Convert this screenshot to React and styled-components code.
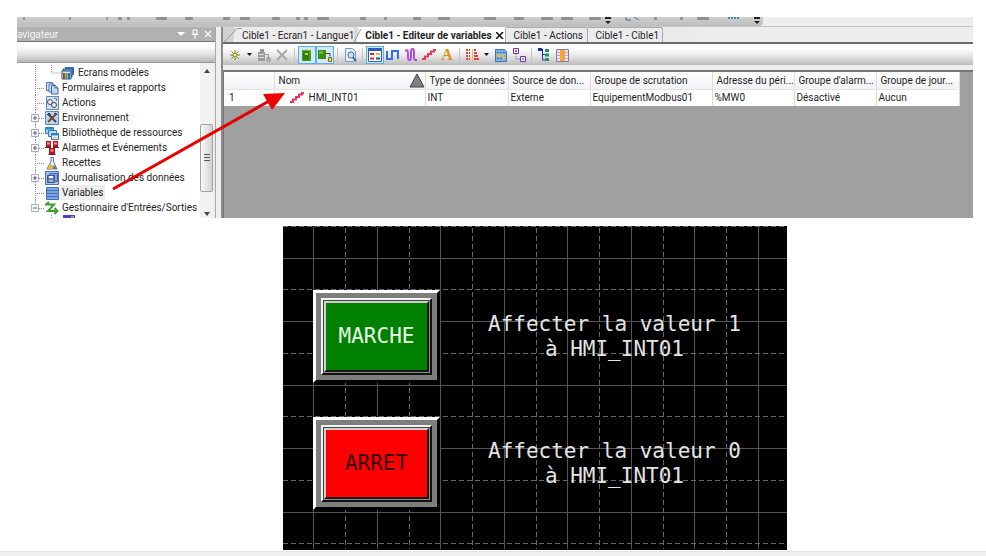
import styled, { createGlobalStyle, css } from 'styled-components';

const GlobalStyle = createGlobalStyle`
  * {
    box-sizing: border-box;
  }

  body {
    margin: 0;
    background: #fff;
    color: #1e1e28;
    font-family: Roboto, 'Open Sans', sans-serif;
    font-size: 10px;
    line-height: 15px;
  }

  button {
    padding: 0;
    border: 0;
    background: none;
    color: inherit;
    font: inherit;
  }

  svg {
    display: block;
    flex: none;
  }
`;

// --- PAGE ---

const Page = styled.div`
  min-height: 100vh;
  display: flex;
  flex-direction: column;
`;

const Footer = styled.footer`
  flex: 1;
  min-height: 5px;
  margin-top: 1px;
  border-top: 1px solid #e4e4e4;
  background: #f0f0f0;
`;

// --- EDITOR WINDOW ---

const Window = styled.section`
  position: relative;
  margin: 17px 13px 8px 17px;
  background: #eee;
`;

const Strip = styled.div`
  display: flex;
  height: 10px;
  border-bottom: 1px solid #c4c4c4;
  overflow: hidden;
`;

const StripBar = styled.div`
  border-radius: 0 0 4px 0;
  background: linear-gradient(#cfcfcf, #bdbdbd);
`;

const Panes = styled.div`
  display: grid;
  grid-template-columns: 199px minmax(0, 1fr);
  column-gap: 5px;
`;

const Arrow = styled.svg`
  position: absolute;
  left: 0;
  top: 0;
  pointer-events: none;
`;

// --- NAVIGATOR ---

const Navigator = styled.aside`
  display: flex;
  flex-direction: column;
  border-right: 1px solid #a8a8a8;
`;

const NavTitle = styled.div`
  display: flex;
  align-items: center;
  height: 14px;
  padding-right: 4px;
  overflow: hidden;
  background: #b1b1b1;
  color: #f4f4f4;
`;

const NavName = styled.h2`
  flex: 1;
  margin: 0;
  font-size: 10px;
  font-weight: 400;
`;

const NavCombo = styled.div`
  height: 22px;
  border-top: 1px solid #777;
  border-bottom: 1px solid #999;
  background: linear-gradient(#fff 20%, #e4e4e4 60%, #b8b8b8);
`;

const NavBody = styled.div`
  display: flex;
  padding-right: 2px;
`;

const Tree = styled.ul`
  flex: 1;
  margin: 0;
  padding: 2px 0 0;
  list-style: none;
  background: #fff;
`;

const TreeRow = styled.li`
  display: flex;
  align-items: center;
  height: ${(p) => (p.$clipped ? 3 : 15)}px;
  overflow: hidden;
  white-space: nowrap;
  ${(p) => p.$clipped && css`align-items: flex-start;`}
`;

const TreeLabel = styled.span`
  margin-left: 1px;
  padding: 0 2px;
  background: ${(p) => (p.$selected ? '#ededed' : 'none')};
`;

const Scrollbar = styled.div`
  display: flex;
  flex-direction: column;
  width: 13px;
  background: #f1f1f1;
`;

const ScrollArrow = styled.button`
  display: flex;
  justify-content: center;
  align-items: center;
  height: ${(p) => (p.$down ? 8 : 16)}px;
`;

const ScrollSpace = styled.div`
  flex: ${(p) => p.$grow};
`;

const ScrollThumb = styled.div`
  display: flex;
  align-items: center;
  justify-content: center;
  height: 68px;
  border: 1px solid #a2a2a2;
  border-radius: 2px;
  background: linear-gradient(90deg, #f8f8f8, #d2d2d2);
`;

// --- EDITOR ---

const Editor = styled.div`
  display: flex;
  flex-direction: column;
  border-left: 2px solid #8a8a8a;
  background: #eee;
`;

const Tabs = styled.div`
  display: flex;
  height: 15px;
  background: linear-gradient(90deg, #d2d2d2, #eee 70%);
  white-space: nowrap;
`;

const Tab = styled.button`
  display: flex;
  align-items: center;
  min-width: ${(p) => p.$width}px;
  gap: ${(p) => (p.$active ? 4 : 0)}px;
  border-top: 1px solid ${(p) => (p.$slant ? 'transparent' : '#aaa')};
  border-right: ${(p) => (p.$slant && !p.$active ? 0 : 1)}px solid #aaa;
  border-radius: 0 3px 0 0;
  ${(p) => !p.$slant && css`
    padding-left: 8px;
    background: #ececec;
  `}
  ${(p) => p.$slant && css`
    background: linear-gradient(100deg, transparent ${p.$slant}px, ${p.$active ? '#fff' : '#ececec'} ${p.$slant}px);
  `}
  ${(p) => p.$active && css`font-weight: 700;`}
`;

const Toolbar = styled.div`
  display: flex;
  align-items: center;
  height: 23px;
  padding-left: 3px;
  border-top: 2px solid #6c6c6c;
  background: linear-gradient(#fff 20%, #e8e8e8 55%, #bcbcbc);
`;

const ToolButton = styled.button`
  display: flex;
  align-items: center;
  justify-content: center;
  width: ${(p) => (p.$narrow ? 11 : 18)}px;
  height: 18px;
  border: 1px solid ${(p) => (p.$pressed ? '#5fb0ea' : 'transparent')};
  background: ${(p) => (p.$pressed ? '#d3e9fa' : 'none')};
`;

const Separator = styled.span`
  width: 1px;
  height: 14px;
  margin: 0 3px;
  background: #c6c6c6;
`;

const Canvas = styled.div`
  flex: 1;
  margin-top: 5px;
  border-top: 2px solid #777;
  border-left: 1px solid #777;
  background: #a0a0a0;
`;

const Table = styled.table`
  table-layout: fixed;
  width: 735px;
  border-collapse: collapse;
  background: #fff;
  white-space: nowrap;

  th,
  td {
    padding: 0 0 0 2px;
    border-right: 1px solid #e0dada;
    font-weight: 400;
    text-align: left;
  }

  th {
    height: 17px;
    padding-left: 4px;
    border-bottom: 1px solid #e4e4e4;
    background: linear-gradient(#fff, #f2f2f4);
  }

  td {
    height: 17px;
  }

  td:first-child {
    padding-left: 5px;
  }
`;

const SortHead = styled.div`
  display: flex;
  align-items: center;
  justify-content: space-between;
`;

const NameCell = styled.div`
  display: flex;
  align-items: center;
  gap: 5px;
  padding-left: 13px;
`;

// --- HMI SCREEN ---

const Hmi = styled.section`
  position: relative;
  align-self: center;
  width: 504px;
  max-width: 100%;
  margin-left: 84px;
  padding: 64px 0 40px 30px;
  background: #000;
  overflow: hidden;
`;

const Grid = styled.svg`
  position: absolute;
  inset: 0;
`;

const Commands = styled.div`
  position: relative;
  display: grid;
  grid-template-columns: 127px max-content;
  column-gap: 48px;
  row-gap: 34px;
  align-items: center;
`;

const PushButton = styled.button`
  display: flex;
  height: 93px;
  padding: 5px;
  border: 3px solid;
  border-color: #fff #000 #000 #fff;
  background: #7c7f7c;
  color: ${(p) => p.$ink};
`;

const Bevel = styled.span`
  flex: 1;
  display: flex;
  border: 2px solid;
  border-color: #f2f2f2 #101010 #101010 #f2f2f2;
`;

const Groove = styled.span`
  flex: 1;
  display: flex;
  border: 1px solid;
  border-color: #444 #8a8a8a #8a8a8a #444;
`;

const Face = styled.span`
  flex: 1;
  display: flex;
  align-items: center;
  justify-content: center;
  border: 2px solid;
  border-color: #cfcfcf #181818 #181818 #cfcfcf;
  background: ${(p) => p.$color};
  font: 21px/25px 'DejaVu Sans Mono', monospace;
`;

const Caption = styled.p`
  margin: 0;
  color: #e4e4e4;
  font: 21px/25px 'DejaVu Sans Mono', monospace;
  text-align: center;
`;

// --- ICONS ---

const icons = {
  screens: (
    <>
      <path d="M4 1h9v8H4z" fill="#3b6fb5" />
      <path d="M2 3h9v8H2z" fill="#7fb1e3" stroke="#28549a" />
      <path d="M1 5h9v8H1z" fill="#e9e4c0" stroke="#28549a" />
      <path d="M3 7v6" stroke="#c33" strokeWidth="2" />
      <path d="M5.500 7v6" stroke="#3a3" strokeWidth="2" />
      <path d="M8 7v6" stroke="#36c" strokeWidth="2" />
    </>
  ),
  forms: (
    <>
      <path d="M1.500 1.500h6v8h-6z" fill="#cfe0f5" stroke="#4b76b8" />
      <path d="M4 3h5v8H4z" fill="#cfe0f5" stroke="#4b76b8" />
      <path d="M6.500 4.500h4l2.500 2.500v6H6.500z" fill="#c3d8f2" stroke="#3d68ac" />
      <path d="M10 4.500V7h3" fill="none" stroke="#3d68ac" />
    </>
  ),
  actions: (
    <>
      <path d="M1.500.500h12v13h-12z" fill="#cfe0f5" stroke="#5f86bb" />
      <circle cx="5" cy="6" r="2.500" fill="#eee" stroke="#555" />
      <circle cx="9" cy="9" r="2.500" fill="#eee" stroke="#444" />
      <path d="M9 2.500h2.500V5" stroke="#678" fill="none" />
    </>
  ),
  environment: (
    <>
      <path d="M.500.500h13v13H.500z" fill="#bcd3f0" stroke="#5b83bd" />
      <path d="M3 3l8 8" stroke="#444" strokeWidth="2" />
      <path d="M11 3l-8 8" stroke="#7a4a26" strokeWidth="2" />
      <path d="M2 4l2-2 2 2M9 3l2-1 1 2" fill="none" stroke="#333" />
    </>
  ),
  library: (
    <>
      <path d="M.500 1.500h8v6h-8z" fill="#a9d1f0" stroke="#2d7cb8" />
      <path d="M.500 1.500h8v2h-8z" fill="#2d8ccb" />
      <path d="M3.500 4.500h8v6h-8z" fill="#bcdcf3" stroke="#2d7cb8" />
      <path d="M6.500 7.500h7v6h-7z" fill="#fff" stroke="#2d6ea8" />
      <path d="M6.500 7.500h7v2h-7z" fill="#2d8ccb" />
      <path d="M8 11.500h4" stroke="#d4a24a" />
    </>
  ),
  alarms: (
    <>
      <path d="M1 0h5v6H1zM8 0h5v6H8zM4 7h6v6H4z" fill="#c0101c" />
      <path d="M2 2.500h3M9 2.500h3M5.500 9.500h3" stroke="#ff9a9a" strokeWidth="2" />
      <path d="M0 6.500h6M8 6.500h6M3.500 13.500h7" stroke="#333" />
    </>
  ),
  recipes: (
    <>
      <path d="M5.500 1.500h3M6 1.500v4l-4 7.500h10L8.500 5.500v-4" fill="#e8eef6" stroke="#66758c" />
      <path d="M3 11l2-2.500 4 1v3.500H2.500z" fill="#e6b735" />
      <path d="M9 9l3 4H8z" fill="#3f78b8" />
    </>
  ),
  logging: (
    <>
      <path d="M.500.500h13v13H.500z" fill="#a9c4ea" stroke="#4a6fb5" />
      <path d="M4.500 2.500h8v8h-8z" fill="#8c9cdc" stroke="#4d64b4" />
      <path d="M2.500 4.500h7v7h-7z" fill="#6478ca" stroke="#3c559f" />
      <path d="M4 5h4v2H4z" fill="#fff" />
      <path d="M4 9h4v2H4z" fill="#8ad08a" />
    </>
  ),
  variables: (
    <>
      <path d="M1.500 1.500h12v12h-12z" fill="#7da7e2" stroke="#426fb5" />
      <path d="M2 4.500h11M2 7.500h11M2 10.500h11" stroke="#3f6cb3" />
    </>
  ),
  io: (
    <path
      d="M4 1L1 3.500h8L3 10h9M9.500 7l3 3-3 3"
      fill="none"
      stroke="#3e9c2d"
      strokeWidth="2"
    />
  ),
  driver: (
    <>
      <path d="M1 0h12v10H1z" fill="#4a3fd0" />
      <path d="M9 1h3v3H9z" fill="#7fb060" />
    </>
  ),
  stairs: (
    <path d="M0 11h3V8.500h3V6h3V3.500h3V2h2" fill="none" stroke="#e8375c" strokeWidth="2" />
  ),
  spark: (
    <>
      <path d="M7 2v10M2 7h10M3.500 3.500l7 7M10.500 3.500l-7 7" stroke="#7d7a1c" />
      <circle cx="7" cy="7" r="2" fill="#f3ee8e" stroke="#8a8420" />
    </>
  ),
  insert: (
    <>
      <path d="M1 4h7v9H1zM3 1h4v3H3z" fill="#9b9b9b" />
      <path d="M2 6.500h5M2 9.500h5" stroke="#ddd" />
      <path d="M8 6.500h3.500V10" fill="none" stroke="#999" />
      <path d="M10 10h3v3h-3z" fill="#ccc" stroke="#888" />
    </>
  ),
  cross: <path d="M2 2l10 10M12 2L2 12" stroke="#a9a9a9" strokeWidth="2" />,
  block: (
    <>
      <path d="M2 2h9v11H2z" fill="#4f9a0c" />
      <path d="M3 3h6v9H3z" fill="#2f7d0a" />
      <path d="M5 5h3v2H5z" fill="#bfe04a" />
      <path d="M3 3l3-1 5 1" stroke="#7fc32b" fill="none" />
    </>
  ),
  blockLink: (
    <>
      <path d="M0 2h8v9H0z" fill="#3c8d0b" />
      <path d="M1 3h4v3H1z" fill="#6cb52a" />
      <path d="M8 5.500h4v3" fill="none" stroke="#444" />
      <path d="M10.500 9.500h3v4h-3z" fill="#f3d34a" stroke="#7b6a12" />
    </>
  ),
  preview: (
    <>
      <path d="M2.500.500h7l3 3v10h-10z" fill="#e3edf8" stroke="#7d9cc4" />
      <circle cx="8" cy="7" r="3" fill="#cfe3f7" stroke="#3f6ea8" />
      <path d="M10 9.500l3 3.500" stroke="#3f6ea8" strokeWidth="2" />
    </>
  ),
  form: (
    <>
      <path d="M.500.500h13v13H.500z" fill="#fff" stroke="#2d5fb8" />
      <path d="M0 1.500h14" stroke="#2d5fb8" strokeWidth="3" />
      <path d="M2 6h4M2 10.500h4" stroke="#d8262c" strokeWidth="2" />
      <path d="M8 6h4" stroke="#e8b52a" strokeWidth="2" />
      <path d="M8 10.500h4" stroke="#2c3fb0" strokeWidth="2" />
    </>
  ),
  square: (
    <path d="M1 3v8h5V3h6v8" fill="none" stroke="#2f6fe0" strokeWidth="2" />
  ),
  wave: (
    <path
      d="M1 3c3-2 3 0 3 3v3c0 4 3 4 3 0V4c0-4 3-4 3 0v5c0 3 1 3 3 3"
      fill="none"
      stroke="#b04be0"
      strokeWidth="2"
    />
  ),
  bars: (
    <>
      <path d="M1 2h4M1 5h4M1 8h4M1 11h4" stroke="#d44" strokeWidth="2" strokeDasharray="2 1" />
      <path d="M7.500 1v12" stroke="#e5c52f" />
      <path d="M9 2h2M9 5h3M9 8h4M9 11h5" stroke="#f03a4a" strokeWidth="2" />
    </>
  ),
  report: (
    <>
      <path d="M1.500 1.500h9l2 2v10h-11z" fill="#7fb2e8" stroke="#4472a8" />
      <path d="M3 4.500h8M3 10.500h8" stroke="#2e6bb0" strokeDasharray="2 1" />
      <path d="M3 7.500h7M8 10h3" stroke="#ecc032" strokeWidth="2" />
    </>
  ),
  links: (
    <>
      <path d="M1.500.500h5v5h-5zM8.500 8.500h5v5h-5z" fill="#f2eaff" stroke="#6b35b5" />
      <path d="M4 6v5h4" fill="none" stroke="#777" strokeDasharray="1 1" />
      <path d="M3 3h2M4 2v2M10 11h2" stroke="#6b35b5" />
    </>
  ),
  hierarchy: (
    <>
      <path d="M1 1.500h5M5.500 2v10h3M5.500 6.500h3" fill="none" stroke="#1a2fb8" />
      <path d="M1 0h4v3H1z" fill="#1a2fb8" />
      <path d="M8 2.500h4M8 7h4M8 11.500h4" stroke="#20935a" strokeWidth="3" />
    </>
  ),
  columns: (
    <>
      <path d="M1.500 1.500h12v12h-12z" fill="#e9e4f2" stroke="#857aa8" />
      <path d="M2 4.500h11M2 7.500h11M2 10.500h11" stroke="#b4acca" />
      <path d="M5 2h5v11H5z" fill="#f2a72e" />
    </>
  ),
};

const Icon = ({ name }) => (
  <svg width="14" height="14" viewBox="0 0 14 14" aria-hidden="true">
    {icons[name]}
  </svg>
);

const LetterA = styled.span`
  color: #d9960f;
  font: 700 16px/16px 'Liberation Serif', serif;
`;

const Caret = () => (
  <svg width="5" height="3" aria-hidden="true">
    <path d="M0 0h5L2.500 3z" fill="#111" />
  </svg>
);

// Dotted branch lines, with the plus or minus box
const Branch = ({ kind }) => {
  const nested = kind === 'nested';
  const boxed = kind === 'plus' || kind === 'minus';
  return (
    <svg width={nested ? 44 : 28} height="15" overflow="visible" aria-hidden="true">
      <g stroke="#8e8e9c" strokeDasharray="1 1" fill="none">
        {kind !== 'leaf' && <path d={kind === 'minus' ? 'M18.500 0v8' : 'M18.500 0v15'} />}
        {nested && <path d="M34.500 0v8h9" />}
        {kind === 'leaf' && <path d="M34.500 0v15" />}
        {!nested && kind !== 'leaf' && <path d="M18 8.500h10" />}
      </g>
      {boxed && (
        <g fill="none" stroke="#a3afc2">
          <path d="M14.500 4.500h7v7h-7z" fill="#f6f6f6" />
          <path d={kind === 'plus' ? 'M16 8h4M18 6v4' : 'M16 8h4'} stroke="#55617c" />
        </g>
      )}
    </svg>
  );
};

// --- DATA ---

const treeItems = [
  { label: 'Ecrans modèles', icon: 'screens', kind: 'nested' },
  { label: 'Formulaires et rapports', icon: 'forms', kind: 'line' },
  { label: 'Actions', icon: 'actions', kind: 'line' },
  { label: 'Environnement', icon: 'environment', kind: 'plus' },
  { label: 'Bibliothèque de ressources', icon: 'library', kind: 'plus' },
  { label: 'Alarmes et Evénements', icon: 'alarms', kind: 'plus' },
  { label: 'Recettes', icon: 'recipes', kind: 'line' },
  { label: 'Journalisation des données', icon: 'logging', kind: 'plus' },
  { label: 'Variables', icon: 'variables', kind: 'line', selected: true },
  { label: "Gestionnaire d'Entrées/Sorties", icon: 'io', kind: 'minus' },
];

const tools = [
  'spark', 'caret', 'insert', 'cross', '|',
  'block*', 'blockLink*', '|',
  'preview', '|',
  'form*', 'square', 'wave', 'stairs', 'letter', '|',
  'bars', 'caret', 'report', 'links', '|',
  'hierarchy', 'columns',
];

const columns = [
  ['Type de données', 'INT', 83],
  ['Source de don...', 'Externe', 82],
  ['Groupe de scrutation', 'EquipementModbus01', 122],
  ['Adresse du péri...', '%MW0', 82],
  ['Groupe d\'alarm...', 'Désactivé', 82],
  ['Groupe de jour...', 'Aucun', 83],
];

const commands = [
  { name: 'MARCHE', color: '#008000', ink: '#e8ffe8', value: 1 },
  { name: 'ARRET', color: '#ff0000', ink: '#300', value: 0 },
];

// [x, width] of the icons cut by the top of the window
const smudges = [
  [6, 2], [52, 2], [89, 2], [101, 4], [110, 3], [139, 11], [168, 8], [206, 7], [223, 10],
  [255, 8], [279, 4], [287, 4], [300, 12], [343, 6], [367, 3], [396, 8], [421, 12],
  [467, 12], [497, 10], [524, 12], [544, 12], [572, 12], [637, 3], [663, 3], [680, 12],
];

const range = (start, step, end) => {
  const out = [];
  for (let v = start; v < end; v += step) out.push(Math.round(v));
  return out;
};

const HmiGrid = () => (
  <Grid width="504" height="323" aria-hidden="true">
    <g stroke="#555" shapeRendering="crispEdges">
      {range(30, 63.5, 504).map((x) => <path key={x} d={`M${x + 0.5} 0V323`} />)}
      {range(32, 63.4, 323).map((y) => <path key={y} d={`M0 ${y + 0.5}H504`} />)}
    </g>
    <g stroke="#666" strokeDasharray="5 3" shapeRendering="crispEdges">
      {range(62, 63.5, 504).map((x) => <path key={x} d={`M${x + 0.5} 2V323`} />)}
      {range(0, 63.4, 323).map((y) => <path key={y} d={`M0 ${y + 0.5}H504`} />)}
    </g>
  </Grid>
);

const Tool = ({ id }) => {
  if (id === '|') return <Separator />;
  if (id === 'caret') return <ToolButton $narrow aria-label="Options"><Caret /></ToolButton>;
  if (id === 'letter') return <ToolButton><LetterA>A</LetterA></ToolButton>;
  const name = id.replace('*', '');
  return (
    <ToolButton $pressed={id.endsWith('*')} aria-label={name}>
      <Icon name={name} />
    </ToolButton>
  );
};

const NavigatorPane = () => (
  <Navigator>
    <NavTitle>
      <NavName>avigateur</NavName>
      <svg width="34" height="10" aria-hidden="true">
        <path d="M0 3h8L4 7z" fill="#fff" />
        <path d="M16 1h4v4h-4zM15 5.500h6M18 6v4" fill="none" stroke="#fff" />
        <path d="M28 2l6 6M34 2l-6 6" stroke="#f4f4f4" strokeWidth="1.500" />
      </svg>
    </NavTitle>
    <NavCombo />
    <NavBody>
      <Tree>
        {treeItems.map((item) => (
          <TreeRow key={item.label}>
            <Branch kind={item.kind} />
            <Icon name={item.icon} />
            <TreeLabel $selected={item.selected}>{item.label}</TreeLabel>
          </TreeRow>
        ))}
        <TreeRow $clipped>
          <Branch kind="leaf" />
          <svg width="17" height="4" aria-hidden="true" />
          <Icon name="driver" />
        </TreeRow>
      </Tree>
      <Scrollbar>
        <ScrollArrow aria-label="Monter">
          <svg width="6" height="4"><path d="M0 4h6L3 0z" fill="#444" /></svg>
        </ScrollArrow>
        <ScrollSpace $grow={44} />
        <ScrollThumb>
          <svg width="6" height="7"><path d="M0 .500h6M0 3.500h6M0 6.500h6" stroke="#555" /></svg>
        </ScrollThumb>
        <ScrollSpace $grow={18} />
        <ScrollArrow $down aria-label="Descendre">
          <svg width="6" height="4"><path d="M0 0h6L3 4z" fill="#444" /></svg>
        </ScrollArrow>
      </Scrollbar>
    </NavBody>
  </Navigator>
);

const VariableTable = () => (
  <Table>
    <colgroup>
      <col width="50" />
      <col width="151" />
      {columns.map(([head, , width]) => <col key={head} width={width} />)}
    </colgroup>
    <thead>
      <tr>
        <th aria-label="Ligne" />
        <th>
          <SortHead>
            Nom
            <svg width="16" height="15" aria-hidden="true">
              <path d="M8 1l7 13H1z" fill="#808080" stroke="#444" />
            </svg>
          </SortHead>
        </th>
        {columns.map(([head]) => <th key={head}>{head}</th>)}
      </tr>
    </thead>
    <tbody>
      <tr>
        <td>1</td>
        <td>
          <NameCell>
            <Icon name="stairs" />
            HMI_INT01
          </NameCell>
        </td>
        {columns.map(([head, value]) => <td key={head}>{value}</td>)}
      </tr>
    </tbody>
  </Table>
);

const App = () => (
  <Page>
    <GlobalStyle />
    <Window>
      <Strip>
        <StripBar>
          <svg width="746" height="9" aria-hidden="true">
            {smudges.map(([x, w]) => (
              <rect key={x} x={x} y="0" width={w} height="3" rx="1" fill="#8f8f8f" />
            ))}
            <path d="M588 0h6v2h-6zM588 4h6l-3 3zM737 0h6v2h-6zM737 4h6l-3 3z" fill="#222" />
            <path d="M609 0v3h5M617 0l5 3" stroke="#3f6fae" fill="none" />
            <path d="M711 1h12" stroke="#3f8fae" strokeWidth="2" strokeDasharray="2 1" />
          </svg>
        </StripBar>
      </Strip>
      <Panes>
        <NavigatorPane />
        <Editor>
          <Tabs>
            <Tab $width={127} $slant={12}>
              <svg width="19" height="15"><path d="M1 14L14 .500H19" fill="none" stroke="#999" /></svg>
              Cible1 - Ecran1 - Langue1
            </Tab>
            <Tab $width={150} $slant={5} $active>
              <svg width="7" height="15"><path d="M0 14L7 1" fill="none" stroke="#999" /></svg>
              Cible1 - Editeur de variables
              <svg width="9" height="7"><path d="M0 0l7 7M7 0L0 7" stroke="#111" strokeWidth="1.500" /></svg>
            </Tab>
            <Tab $width={82}>Cible1 - Actions</Tab>
            <Tab $width={75}>Cible1 - Cible1</Tab>
          </Tabs>
          <Toolbar>
            {tools.map((id, i) => <Tool key={i} id={id} />)}
          </Toolbar>
          <Canvas>
            <VariableTable />
          </Canvas>
        </Editor>
      </Panes>
      <Arrow width="290" height="200" aria-hidden="true">
        <path d="M96 172L254 83" stroke="#e60000" strokeWidth="3" />
        <path d="M268 76L246 77L255 93z" fill="#f00000" />
      </Arrow>
    </Window>

    <Hmi>
      <HmiGrid />
      <Commands>
        {commands.flatMap((c) => [
          <PushButton key={c.name} $ink={c.ink}>
            <Bevel>
              <Groove>
                <Face $color={c.color}>{c.name}</Face>
              </Groove>
            </Bevel>
          </PushButton>,
          <Caption key={c.value}>
            Affecter la valeur {c.value}
            <br />à HMI_INT01
          </Caption>,
        ])}
      </Commands>
    </Hmi>
    <Footer />
  </Page>
);

export default App;
